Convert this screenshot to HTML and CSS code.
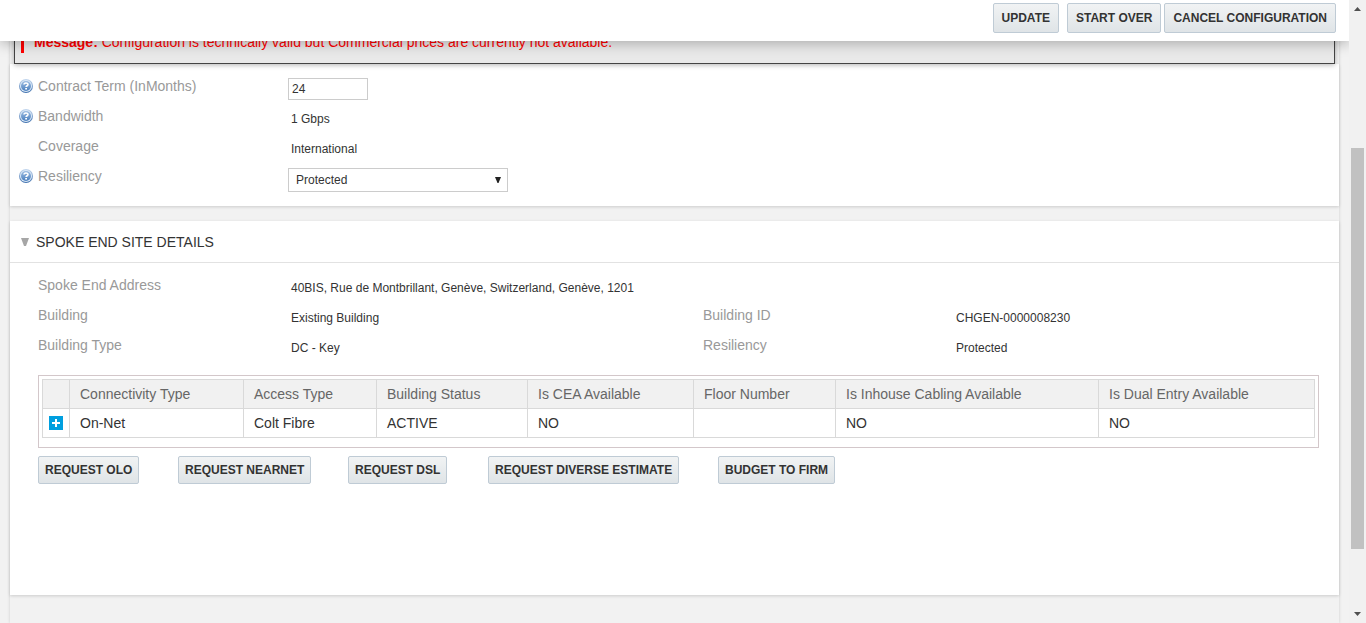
FILE: index.html
```html
<!DOCTYPE html>
<html lang="en">
<head>
<meta charset="utf-8">
<title>Configuration</title>
<link rel="stylesheet" href="styles.css">
</head>
<body>
<svg class="defs" width="0" height="0" aria-hidden="true">
  <defs>
    <linearGradient id="ball" x1="0" y1="0" x2="0" y2="1">
      <stop offset="0" stop-color="#9dbde2"/>
      <stop offset="1" stop-color="#4a7fbe"/>
    </linearGradient>
    <linearGradient id="rim" x1="0" y1="0" x2="0" y2="1">
      <stop offset="0" stop-color="#c4d8ef"/>
      <stop offset="1" stop-color="#3f70ad"/>
    </linearGradient>
    <symbol id="help" viewBox="0 0 14 14">
      <circle cx="7" cy="7" r="7" fill="url(#rim)"/>
      <circle cx="7" cy="7" r="6" fill="#dbe8f6"/>
      <circle cx="7" cy="7" r="5" fill="url(#ball)"/>
      <path d="M5 5.6C5 3.4 9 3.4 9 5.5C9 6.8 7.1 6.7 7.1 8.1" fill="none" stroke="#fff" stroke-width="1.6"/>
      <rect x="6.2" y="9" width="1.8" height="1.5" fill="#fff"/>
    </symbol>
  </defs>
</svg>
<div class="page">
  <header class="toolbar">
    <button type="button" class="btn btn-top btn-update">UPDATE</button>
    <button type="button" class="btn btn-top">START OVER</button>
    <button type="button" class="btn btn-top">CANCEL CONFIGURATION</button>
  </header>
  <main class="sheet">
    <div class="notice">
      <p class="notice-text"><strong>Message:</strong> Configuration is technically valid but Commercial prices are currently not available.</p>
    </div>
    <section class="panel">
      <div class="fields">
        <div class="row">
          <svg class="help"><use href="#help"/></svg>
          <label class="label" for="term">Contract Term (InMonths)</label>
          <input class="text-input" id="term" type="text" value="24">
        </div>
        <div class="row">
          <svg class="help"><use href="#help"/></svg>
          <span class="label">Bandwidth</span>
          <span class="value">1 Gbps</span>
        </div>
        <div class="row">
          <span class="help"></span>
          <span class="label">Coverage</span>
          <span class="value">International</span>
        </div>
        <div class="row">
          <svg class="help"><use href="#help"/></svg>
          <label class="label" for="resiliency">Resiliency</label>
          <div class="select-wrap">
            <select class="select" id="resiliency"><option>Protected</option></select>
            <svg class="caret" width="6" height="6" viewBox="0 0 6 6"><path d="M0 0H6L3.5 6H2.5Z" fill="#222"/></svg>
          </div>
        </div>
      </div>
    </section>
    <section class="panel">
      <h2 class="panel-title">
        <svg width="8" height="8" viewBox="0 0 8 8"><path d="M0 0H8L5 8H3Z" fill="#a6a6a6"/></svg>
        SPOKE END SITE DETAILS
      </h2>
      <div class="details">
        <div class="pairs">
          <span class="label">Spoke End Address</span>
          <span class="value wide">40BIS, Rue de Montbrillant, Genève, Switzerland, Genève, 1201</span>
          <span class="label">Building</span>
          <span class="value">Existing Building</span>
          <span class="label">Building ID</span>
          <span class="value">CHGEN-0000008230</span>
          <span class="label">Building Type</span>
          <span class="value">DC - Key</span>
          <span class="label">Resiliency</span>
          <span class="value">Protected</span>
        </div>
        <div class="table-box">
          <table class="grid">
            <colgroup>
              <col class="c-expand"><col class="c-conn"><col class="c-access"><col class="c-status">
              <col class="c-cea"><col class="c-floor"><col class="c-cabling"><col class="c-dual">
            </colgroup>
            <thead>
              <tr>
                <th></th>
                <th>Connectivity Type</th>
                <th>Access Type</th>
                <th>Building Status</th>
                <th>Is CEA Available</th>
                <th>Floor Number</th>
                <th>Is Inhouse Cabling Available</th>
                <th>Is Dual Entry Available</th>
              </tr>
            </thead>
            <tbody>
              <tr>
                <td class="expand-cell"><button type="button" class="expand" aria-label="Expand row"><svg width="14" height="14" viewBox="0 0 14 14"><path d="M7 3V11M3 7H11" stroke="#fff" stroke-width="2"/></svg></button></td>
                <td>On-Net</td>
                <td>Colt Fibre</td>
                <td>ACTIVE</td>
                <td>NO</td>
                <td></td>
                <td>NO</td>
                <td>NO</td>
              </tr>
            </tbody>
          </table>
        </div>
        <div class="actions">
          <button type="button" class="btn">REQUEST OLO</button>
          <button type="button" class="btn">REQUEST NEARNET</button>
          <button type="button" class="btn">REQUEST DSL</button>
          <button type="button" class="btn">REQUEST DIVERSE ESTIMATE</button>
          <button type="button" class="btn">BUDGET TO FIRM</button>
        </div>
      </div>
    </section>
  </main>
</div>
<div class="scrollbar" aria-hidden="true">
  <svg width="7" height="4" viewBox="0 0 7 4"><path d="M0 4L3.5 0L7 4Z" fill="#505050"/></svg>
  <div class="track"><div class="thumb"></div></div>
  <svg width="7" height="4" viewBox="0 0 7 4"><path d="M0 0L3.5 4L7 0Z" fill="#505050"/></svg>
</div>
</body>
</html>
```

FILE: styles.css
```css
* {
  box-sizing: border-box;
}

body {
  margin: 0;
  height: 100vh;
  overflow: hidden;
  display: flex;
  background: #f2f2f2;
  color: #333;
  font: 14px "Liberation Sans", Arial, sans-serif;
}

.defs {
  position: absolute;
}

.page {
  position: relative;
  flex: 1;
  min-width: 0;
  overflow: hidden;
}

.toolbar {
  position: absolute;
  z-index: 2;
  top: 0;
  left: 0;
  right: 0;
  display: flex;
  justify-content: flex-end;
  gap: 3px;
  padding: 3px 13px 8px;
  background: #fff;
  box-shadow: 0 3px 12px rgba(0, 0, 0, 0.25);
}

.btn {
  height: 28px;
  padding: 0 6px;
  border: 1px solid #bfcbd5;
  border-radius: 2px;
  background: linear-gradient(#f1f3f4, #dfe4e7);
  color: #333;
  font: bold 12px "Liberation Sans", Arial, sans-serif;
  white-space: nowrap;
}

.btn-top {
  height: 30px;
  padding: 0 8px;
}

.btn-update {
  margin-right: 5px;
}

.sheet {
  min-height: 100vh;
  margin: 0 10px;
  padding-top: 20px;
  box-shadow: 0 0 3px rgba(0, 0, 0, 0.15);
}

.notice {
  position: relative;
  margin: 0 4px;
  padding: 10px 6px;
  border: 1px solid #444;
  background: #e9e9e9;
  box-shadow: 0 1px 5px rgba(0, 0, 0, 0.3);
  z-index: 1;
}

.notice-text {
  margin: 0;
  padding: 3px 10px;
  border-left: 3px solid #f00;
  color: #f00;
  line-height: 16px;
}

.panel {
  margin-bottom: 15px;
  background: #fff;
  box-shadow: 0 1px 3px rgba(0, 0, 0, 0.16);
}

.fields {
  padding: 7px 9px 14px;
}

.row {
  display: flex;
}

.help {
  flex: none;
  width: 14px;
  height: 14px;
  margin: 8px 5px 0 0;
}

.label {
  flex: none;
  width: 250px;
  color: #999;
  line-height: 30px;
}

.value {
  padding: 6px 0 0 3px;
  font-size: 12px;
  line-height: 24px;
}

.text-input,
.select {
  border: 1px solid #ccc;
  border-radius: 0;
  background: #fff;
  color: #333;
  font: 12px "Liberation Sans", Arial, sans-serif;
}

.text-input {
  width: 80px;
  height: 22px;
  margin-top: 7px;
  padding: 0 3px;
}

.select-wrap {
  position: relative;
  width: 220px;
  margin-top: 7px;
}

.select {
  display: block;
  width: 100%;
  height: 24px;
  padding: 0 7px;
  appearance: none;
}

.caret {
  position: absolute;
  top: 9px;
  right: 7px;
  pointer-events: none;
}

.panel-title {
  display: flex;
  align-items: center;
  gap: 7px;
  margin: 0;
  padding: 1px 11px 0;
  border-bottom: 1px solid #e2e2e2;
  font-size: 14px;
  font-weight: normal;
  line-height: 40px;
}

.details {
  padding: 7px 20px 111px 28px;
}

.pairs {
  display: grid;
  grid-template-columns: 250px 415fr 250px 366fr;
}

.wide {
  grid-column: span 3;
}

.table-box {
  margin-top: 15px;
  padding: 3px 3px 9px;
  border: 1px solid #d3c7ca;
}

.grid {
  width: 100%;
  table-layout: fixed;
  border-collapse: collapse;
}

.grid th,
.grid td {
  height: 29px;
  padding: 0 10px;
  border: 1px solid #d9d9d9;
  text-align: left;
  font-weight: normal;
  white-space: nowrap;
}

.grid th {
  background: #f1f1f1;
  color: #666;
}

.grid .expand-cell {
  padding: 0 6px;
}

.c-expand { width: 27px; }
.c-conn { width: 174px; }
.c-access { width: 133px; }
.c-status { width: 151px; }
.c-cea { width: 166px; }
.c-floor { width: 142px; }
.c-cabling { width: 263px; }
.c-dual { width: 216px; }

.expand {
  display: block;
  width: 14px;
  height: 14px;
  padding: 0;
  border: 0;
  background: #009fdf;
}

.expand svg {
  display: block;
}

.actions {
  display: grid;
  grid-template-columns: 140px 170px 140px 230px auto;
  justify-items: start;
  margin-top: 8px;
}

.scrollbar {
  flex: none;
  display: flex;
  flex-direction: column;
  align-items: center;
  width: 17px;
  padding: 7px 0;
  background: #f1f1f1;
}

.track {
  flex: 1;
  width: 13px;
  padding: 137px 0 63px;
}

.thumb {
  height: 100%;
  background: #c1c1c1;
}
```
